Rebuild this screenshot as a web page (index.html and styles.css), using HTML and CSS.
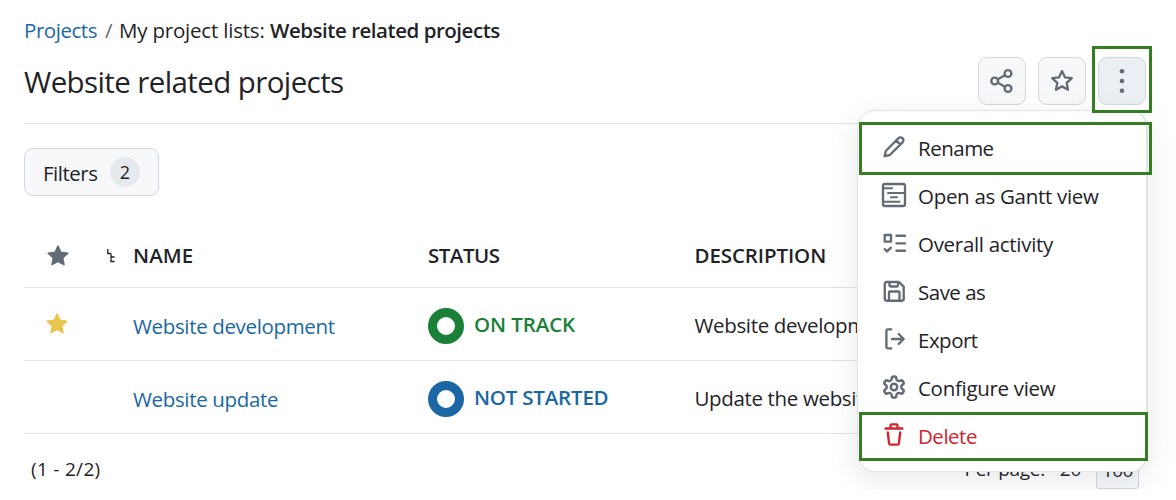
FILE: index.html
```
<!DOCTYPE html>
<html lang="en">
<head>
<meta charset="utf-8">
<title>Website related projects</title>
<link rel="stylesheet" href="styles.css">
</head>
<body>
<div class="page">
  <nav class="breadcrumb">
    <a class="crumb-link" href="#">Projects</a><span class="crumb-sep">/</span><span class="crumb-group">My project lists:</span><strong class="crumb-current">Website related projects</strong>
  </nav>
  <header class="header">
    <h1 class="title">Website related projects</h1>
    <div class="actions">
      <button class="icon-button" aria-label="Share"><svg class="icon" viewBox="0 0 24 24"><circle cx="18" cy="4.5" r="3.4"/><circle cx="4.7" cy="12" r="3.4"/><circle cx="18" cy="19.5" r="3.4"/><path d="M7.8 10.3 15 6.2M7.8 13.7 15 17.8"/></svg></button>
      <button class="icon-button" aria-label="Favorite"><svg class="icon" viewBox="0 0 24 24"><path d="M12 2.1l2.9 6.200 6.900.900-5.100 4.700 1.300 6.800L12 17.400l-6 3.300 1.300-6.800-5.100-4.700 6.900-.900z"/></svg></button>
      <button class="icon-button active" aria-label="More"><svg class="icon solid" viewBox="0 0 24 24"><circle cx="12" cy="2.2" r="2.3"/><circle cx="12" cy="12" r="2.3"/><circle cx="12" cy="21.8" r="2.3"/></svg></button>
    </div>
  </header>
  <div class="toolbar"><button class="filters"><span class="filters-label">Filters</span><span class="counter">2</span></button></div>
  <section class="table">
    <div class="row head">
      <span class="cell-star"><svg class="icon star" viewBox="0 0 24 24"><path d="M12 2.1l2.9 6.200 6.900.900-5.100 4.700 1.300 6.800L12 17.400l-6 3.300 1.300-6.800-5.100-4.700 6.900-.900z"/></svg></span>
      <span class="cell-tree"><svg class="tree" viewBox="0 0 8 14"><path d="M.8 0v4.500H4M4 4.500V12.500H7.500M4 8H7.500"/></svg></span>
      <span class="t-name">NAME</span><span class="t-status">STATUS</span><span class="t-desc">DESCRIPTION</span>
    </div>
    <div class="row">
      <span class="cell-star gold"><svg class="icon star" viewBox="0 0 24 24"><path d="M12 2.1l2.9 6.200 6.900.900-5.100 4.700 1.300 6.800L12 17.400l-6 3.300 1.300-6.800-5.100-4.700 6.900-.900z"/></svg></span>
      <span></span><a class="link" href="#">Website development</a>
      <span class="status green"><i class="ring"></i><b>ON TRACK</b></span><span class="desc">Website developm</span>
    </div>
    <div class="row">
      <span></span><span></span><a class="link" href="#">Website update</a>
      <span class="status blue"><i class="ring"></i><b>NOT STARTED</b></span><span class="desc">Update the website</span>
    </div>
  </section>
  <footer class="pagination"><span class="range">(1 - 2/2)</span><span class="per-page"><span>Per page:</span><span class="size">20</span><span class="size-current">100</span></span></footer>

  <div class="menu">
    <div class="item"><svg class="icon" viewBox="0 0 24 24"><path d="M2.6 21.200 3.800 16 16.300 3.200a2.900 2.900 0 0 1 4.200 4.200L7.800 20zM14.200 5.400l4.200 4.200"/></svg><span>Rename</span></div>
    <div class="item"><svg class="icon" viewBox="0 0 24 24"><rect x="1" y="1" width="22" height="22" rx="1.800"/><path class="thin" d="M2 5.300h8M6 10h17M9 14.300h6M2 18.800h15.500"/></svg><span class="wide">Open as Gantt view</span></div>
    <div class="item"><svg class="icon" viewBox="0 0 24 24"><rect x="2.700" y="4" width="6.300" height="6.600"/><path d="M14.500 4.700H23M14.500 12.300H23M14.500 19.700H23M2.700 18.200l2.300 2.200L9 16.700"/></svg><span class="wide">Overall activity</span></div>
    <div class="item"><svg class="icon" viewBox="0 0 24 24"><path d="M4.400 3H17l4.700 4.700v12.400a1.600 1.600 0 0 1-1.600 1.600H4.400a1.600 1.600 0 0 1-1.600-1.600V4.600A1.600 1.600 0 0 1 4.400 3zM7.500 3v3.300a1.200 1.200 0 0 0 1.200 1.200h6.100A1.200 1.200 0 0 0 16 6.300V3M7 21.700v-8.200a1 1 0 0 1 1-1h8.500a1 1 0 0 1 1 1v8.200"/></svg><span>Save as</span></div>
    <div class="item"><svg class="icon" viewBox="0 0 24 24"><path d="M9.200 2.300H5.700a1.300 1.300 0 0 0-1.300 1.300v16.500a1.300 1.300 0 0 0 1.300 1.300h3.500M10 12h11.500M16.700 7l5 5-5 5"/></svg><span>Export</span></div>
    <div class="item"><svg class="icon" viewBox="0.700 0.700 22.600 22.600"><path d="M12.220 2h-.44a2 2 0 0 0-2 2v.18a2 2 0 0 1-1 1.730l-.43.250a2 2 0 0 1-2 0l-.150-.080a2 2 0 0 0-2.730.730l-.220.380a2 2 0 0 0 .730 2.730l.150.100a2 2 0 0 1 1 1.720v.510a2 2 0 0 1-1 1.740l-.150.090a2 2 0 0 0-.730 2.730l.220.380a2 2 0 0 0 2.730.730l.150-.080a2 2 0 0 1 2 0l.430.250a2 2 0 0 1 1 1.730V20a2 2 0 0 0 2 2h.440a2 2 0 0 0 2-2v-.180a2 2 0 0 1 1-1.730l.430-.250a2 2 0 0 1 2 0l.150.080a2 2 0 0 0 2.730-.730l.220-.390a2 2 0 0 0-.730-2.730l-.150-.080a2 2 0 0 1-1-1.740v-.500a2 2 0 0 1 1-1.740l.150-.090a2 2 0 0 0 .730-2.730l-.220-.380a2 2 0 0 0-2.730-.730l-.150.080a2 2 0 0 1-2 0l-.430-.250a2 2 0 0 1-1-1.730V4a2 2 0 0 0-2-2z"/><circle cx="12" cy="12" r="3"/></svg><span class="wide">Configure view</span></div>
    <div class="item danger"><svg class="icon" viewBox="0 0 24 24"><path d="M3.600 5.500h16.800M8.500 5.200V2.400A1.100 1.100 0 0 1 9.600 1.300h4.800a1.100 1.100 0 0 1 1.100 1.100v2.800M5.800 9.500l1.300 11a1.300 1.300 0 0 0 1.300 1.100h7.200a1.300 1.300 0 0 0 1.300-1.100l1.300-11"/></svg><span>Delete</span></div>
  </div>
  <div class="mark mark-more"></div>
  <div class="mark mark-rename"></div>
  <div class="mark mark-delete"></div>
</div>
</body>
</html>
```
FILE: styles.css
```
* { box-sizing: border-box; }
body { margin: 0; background: #fff; color: #1f2328; font: 20.5px/28px "Open Sans", "Noto Sans", sans-serif; }
button { font: inherit; color: inherit; padding: 0; }
a { text-decoration: none; }
.page { position: relative; width: 1176px; height: 490px; overflow: hidden; padding: 16px 30px 0 24px; }
.breadcrumb { display: flex; height: 28px; white-space: nowrap; }
.crumb-link { color: #1a67a3; width: 81px; letter-spacing: -.45px; }
.crumb-sep { color: #636c76; width: 14px; }
.crumb-group { width: 151px; letter-spacing: -.2px; }
.crumb-current { font-weight: 600; letter-spacing: -.47px; }
.header { display: flex; justify-content: space-between; height: 80px; padding-top: 13px; border-bottom: 1px solid #e0e3e6; }
.title { margin: 5px 0 0; font-size: 29.5px; line-height: 40px; font-weight: 400; letter-spacing: -.6px; }
.actions { display: flex; gap: 12px; }
.icon-button { display: flex; align-items: center; justify-content: center; width: 48px; height: 48px; border: 1px solid #d1d9e0; border-radius: 9px; background: #f6f8fa; color: #636c76; }
.icon-button.active { background: #ebeef2; }
.icon { display: block; flex: none; width: 24px; height: 24px; overflow: visible; fill: none; stroke: currentColor; stroke-width: 2.35; stroke-linecap: round; stroke-linejoin: round; }
.icon .thin { stroke-width: 2.1; }
.icon.solid { fill: currentColor; stroke: none; }
.icon.star { fill: currentColor; stroke-width: 1.5; }
.toolbar { padding-top: 24px; height: 100px; }
.filters { display: flex; align-items: center; width: 135px; height: 48px; padding-left: 18px; gap: 12px; border: 1px solid #d1d9e0; border-radius: 9px; background: #f6f8fa; }
.filters-label { width: 55px; letter-spacing: -.5px; text-align: left; padding-top: 2px; }
.counter { width: 30px; height: 30px; border-radius: 15px; background: #e6eaef; font-size: 18px; line-height: 31px; text-align: center; }
.row { display: grid; grid-template-columns: 85px 24px 295px 266.5px 163px; align-items: center; height: 73px; border-bottom: 1px solid #e0e3e6; white-space: nowrap; }
.row.head { height: 64px; font-weight: 600; }
.row.head span { padding-bottom: 2px; }
.cell-star { padding-left: 22px; color: #636c76; }
.row.head .cell-star { padding-bottom: 0; }
.cell-star.gold { padding: 0 0 1px 21px; color: #eac54f; }
.tree { display: block; width: 8px; height: 14px; margin: 2px 0 0 -2px; fill: none; stroke: #1f2328; stroke-width: 1.3; }
.t-name { letter-spacing: .1px; }
.t-status { letter-spacing: -.5px; }
.t-desc { letter-spacing: -.1px; }
.link { color: #1a67a3; letter-spacing: -.35px; padding-top: 3px; }
.status { display: flex; align-items: center; gap: 10px; }
.status b { font-weight: 600; letter-spacing: -.1px; padding-bottom: 1px; }
.status.blue b { letter-spacing: -.2px; }
.ring { width: 36px; height: 36px; margin-top: 3px; border: 9px solid; border-radius: 50%; }
.green { color: #1a7f37; }
.blue { color: #1a67a3; }
.desc { overflow: hidden; letter-spacing: -.35px; padding-top: 2px; }
.pagination { display: flex; justify-content: space-between; padding: 21px 7px 0 7px; font-size: 19px; letter-spacing: -.3px; }
.range { letter-spacing: .3px; }
.per-page { display: flex; gap: 15px; }
.size-current { width: 43px; height: 43px; margin-top: -9px; line-height: 46px; font-size: 19px; letter-spacing: -.6px; border: 1px solid #d1d9e0; border-radius: 3px; background: #f6f8fa; text-align: center; }
.menu { position: absolute; left: 857px; top: 110px; width: 291px; height: 362px; padding: 13px 0 0 24px; border: 1px solid #e0e4e9; border-right-width: 2px; border-radius: 18px; background: #fff; box-shadow: 0 9px 30px rgba(66,74,83,.12); }
.item { display: flex; align-items: center; gap: 12px; height: 48px; white-space: nowrap; color: #636c76; }
.item .icon { margin-top: -2px; }
.item span { color: #1f2328; letter-spacing: -.5px; padding-bottom: 1px; }
.item span.wide { letter-spacing: -.3px; }
.item.danger, .item.danger span { color: #d1242f; }
.mark { position: absolute; border: 3px solid #347d20; }
.mark-more { left: 1092px; top: 46px; width: 60px; height: 67px; }
.mark-rename { left: 859px; top: 122px; width: 293px; height: 53px; }
.mark-delete { left: 859px; top: 412px; width: 289px; height: 49px; }
```
